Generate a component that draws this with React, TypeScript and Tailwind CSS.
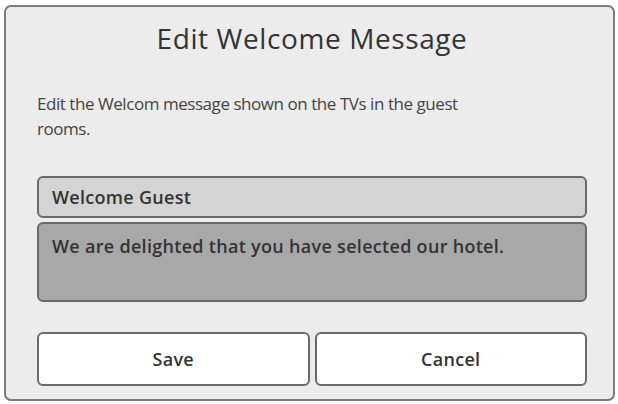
import React from "react";

export default function App() {
  return (
    <div className="w-[618px] h-[404px] bg-white pl-[4px] pt-[5px]" style={{ fontFamily: '"Open Sans", "Noto Sans", sans-serif' }}>
      <div className="w-[611px] h-[396px] rounded-[7px] border-2 border-[#7c7c7c] bg-[#ececec] flex flex-col pl-[31px] pr-[26px]">
        <h1 className="mt-[12px] h-[38px] text-center text-[28px] leading-[38px] text-[#333] tracking-[0.6px]">
          Edit Welcome Message
        </h1>
        <p className="mt-[34px] text-[17px] leading-[25px] text-[#444] tracking-[-0.45px] pr-[120px]">
          Edit the Welcom message shown on the TVs in the guest rooms.
        </p>
        <div className="mt-[35px] h-[42px] rounded-[6px] border-2 border-[#6a6a6a] bg-[#d4d4d4] flex items-center px-[13px] text-[18px] font-semibold text-[#333] tracking-[0.3px]">
          Welcome Guest
        </div>
        <div className="mt-[4px] h-[80px] rounded-[6px] border-2 border-[#6a6a6a] bg-[#a8a8a8] px-[13px] pt-[9px] text-[18px] font-semibold text-[#333] tracking-[0.3px]">
          We are delighted that you have selected our hotel.
        </div>
        <div className="mt-[30px] grid grid-cols-2 gap-[5px]">
          <button className="h-[54px] rounded-[6px] border-2 border-[#6a6a6a] bg-white text-[18px] font-semibold text-[#333] tracking-[0.3px]">
            Save
          </button>
          <button className="h-[54px] rounded-[6px] border-2 border-[#6a6a6a] bg-white text-[18px] font-semibold text-[#333] tracking-[0.3px]">
            Cancel
          </button>
        </div>
      </div>
    </div>
  );
}
